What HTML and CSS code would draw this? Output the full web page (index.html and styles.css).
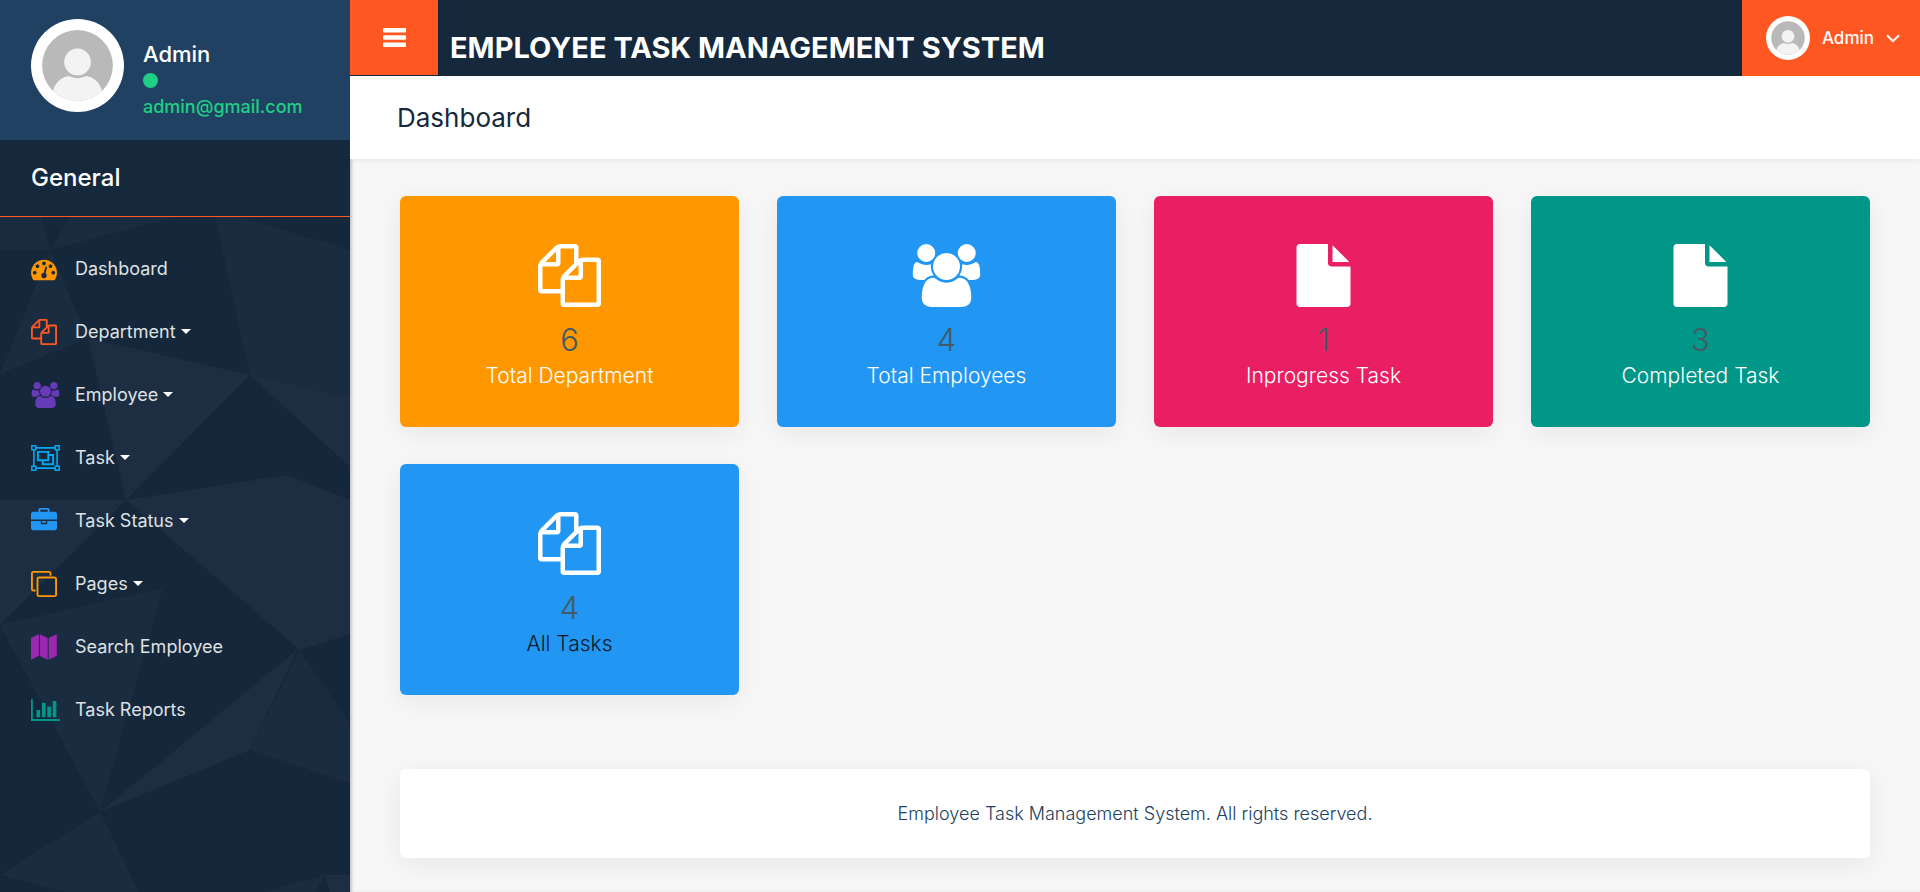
FILE: index.html
```html
<!DOCTYPE html>
<html lang="en">
<head>
<meta charset="utf-8">
<title>Employee Task Management System</title>
<meta name="viewport" content="width=device-width, initial-scale=1">
<link rel="stylesheet" href="styles.css">
</head>
<body>
<svg class="sprite" aria-hidden="true">
  <symbol id="copy" viewBox="0 0 1792 1792"><path d="M1696 384q40 0 68 28t28 68v1216q0 40-28 68t-68 28h-960q-40 0-68-28t-28-68v-288h-544q-40 0-68-28t-28-68v-672q0-40 20-88t48-76l408-408q28-28 76-48t88-20h416q40 0 68 28t28 68v328q68-40 128-40h416zm-544 213l-299 299h299v-299zm-640-384l-299 299h299v-299zm196 647l316-316v-416h-384v416q0 40-28 68t-68 28h-416v640h512v-256q0-40 20-88t48-76zm956 804v-1152h-384v416q0 40-28 68t-68 28h-416v640h896z"/></symbol>
  <symbol id="file" viewBox="0 0 1792 1792"><path d="M1152 512v-472q22 14 36 28l408 408q14 14 28 36h-472zm-128 32q0 40 28 68t68 28h544v1056q0 40-28 68t-68 28h-1344q-40 0-68-28t-28-68v-1600q0-40 28-68t68-28h800v544z"/></symbol>
  <symbol id="users" viewBox="0 0 1920 1792"><path d="M593 896q-162 5-265 128h-134q-82 0-138-40.5t-56-118.5q0-353 124-353 6 0 43.5 21t97.5 42.5 119 21.5q67 0 133-23-5 37-5 66 0 139 81 256zm1071 637q0 120-73 189.5t-194 69.5h-874q-121 0-194-69.5t-73-189.5q0-53 3.5-103.5t14-109 26.5-108.5 43-97.5 62-81 85.5-53.5 111.5-20q10 0 43 21.5t73 48 107 48 135 21.5 135-21.5 107-48 73-48 43-21.5q61 0 111.5 20t85.5 53.5 62 81 43 97.5 26.5 108.5 14 109 3.5 103.5zm-1024-1277q0 106-75 181t-181 75-181-75-75-181 75-181 181-75 181 75 75 181zm704 384q0 159-112.5 271.5t-271.5 112.5-271.5-112.5-112.5-271.5 112.5-271.5 271.5-112.5 271.5 112.5 112.5 271.5zm576 225q0 78-56 118.5t-138 40.5h-134q-103-123-265-128 81-117 81-256 0-29-5-66 66 23 133 23 59 0 119-21.5t97.5-42.5 43.5-21q124 0 124 353zm-128-609q0 106-75 181t-181 75-181-75-75-181 75-181 181-75 181 75 75 181z"/></symbol>
  <symbol id="gauge" viewBox="0 0 1792 1792"><path d="M384 1152q0-53-37.5-90.5t-90.5-37.5-90.5 37.5-37.5 90.5 37.5 90.5 90.5 37.5 90.5-37.5 37.5-90.5zm192-448q0-53-37.5-90.5t-90.5-37.5-90.5 37.5-37.5 90.5 37.5 90.5 90.5 37.5 90.5-37.5 37.5-90.5zm428 481l101-382q6-26-7.5-48.5t-38.5-29.5-48 6.5-30 39.5l-101 382q-60 5-107 43.5t-63 98.5q-20 77 20 146t117 89 146-20 89-117q16-60-6-117t-72-91zm660-33q0-53-37.5-90.5t-90.5-37.5-90.5 37.5-37.5 90.5 37.5 90.5 90.5 37.5 90.5-37.5 37.5-90.5zm-640-640q0-53-37.5-90.5t-90.5-37.5-90.5 37.5-37.5 90.5 37.5 90.5 90.5 37.5 90.5-37.5 37.5-90.5zm448 192q0-53-37.5-90.5t-90.5-37.5-90.5 37.5-37.5 90.5 37.5 90.5 90.5 37.5 90.5-37.5 37.5-90.5zm320 448q0 261-141 483-19 29-54 29h-1402q-35 0-54-29-141-221-141-483 0-182 71-348t191-286 286-191 348-71 348 71 286 191 191 286 71 348z"/></symbol>
  <symbol id="group" viewBox="0 0 29 26"><g fill="none" stroke="currentColor"><path stroke-width="1.6" d="M5 2.9h19M5 23.1h19M2.9 5v16M26.1 5v16"/><path stroke-width="1.5" d="M.8.8h4v4h-4zM24.2.8h4v4h-4zM.8 21.2h4v4h-4zM24.2 21.2h4v4h-4z"/><path stroke-width="1.9" d="M6.9 6.9h10.4v8.4H6.9zM17.3 10h4.800v9.200H11.700v-3.900"/></g></symbol>
  <symbol id="briefcase" viewBox="0 0 1792 1792"><path d="M640 256h512v-128h-512v128zm1152 640v480q0 66-47 113t-113 47h-1472q-66 0-113-47t-47-113v-480h672v160q0 26 19 45t45 19h320q26 0 45-19t19-45v-160h672zm-768 0v128h-256v-128h256zm768-480v384h-1792v-384q0-66 47-113t113-47h352v-160q0-40 28-68t68-28h576q40 0 68 28t28 68v160h352q66 0 113 47t47 113z"/></symbol>
  <symbol id="clone" viewBox="0 0 1792 1792"><path d="M1664 1632v-1088q0-13-9.5-22.5t-22.5-9.5h-1088q-13 0-22.5 9.5t-9.5 22.5v1088q0 13 9.5 22.5t22.5 9.5h1088q13 0 22.5-9.5t9.5-22.5zm128-1088v1088q0 66-47 113t-113 47h-1088q-66 0-113-47t-47-113v-1088q0-66 47-113t113-47h1088q66 0 113 47t47 113zm-384-384v160h-128v-160q0-13-9.5-22.5t-22.5-9.5h-1088q-13 0-22.5 9.5t-9.5 22.5v1088q0 13 9.5 22.5t22.5 9.5h160v128h-160q-66 0-113-47t-47-113v-1088q0-66 47-113t113-47h1088q66 0 113 47t47 113z"/></symbol>
  <symbol id="map" viewBox="0 0 26 26"><path d="M0 4.3Q0 4 .4 3.8L7.9.2v21.6L.5 25.6Q0 25.8 0 25.2zM8.9.2l7.8 3.9v21.7l-7.8-3.9zM17.7 4.1l7.6-3.8q.5-.2.5.4v20.9q0 .3-.4.5l-7.7 3.7z"/></symbol>
  <symbol id="chart" viewBox="0 0 2048 1792"><path d="M640 896v512h-256v-512h256zm384-512v1024h-256v-1024h256zm1024 1152v128h-2048v-1536h128v1408h1920zm-640-896v768h-256v-768h256zm384-384v1152h-256v-1152h256z"/></symbol>
  <symbol id="avatar" viewBox="0 0 92 92"><clipPath id="disc"><circle cx="46" cy="46" r="35"/></clipPath><circle cx="46" cy="46" r="46" fill="#fff"/><circle cx="46" cy="46" r="35" fill="#b9b9b9"/><g clip-path="url(#disc)" fill="#f3f3f3"><path d="M20 84q0-24 17-27.500q9 4 18 0Q72 60 72 84z"/><circle cx="46" cy="42.500" r="13.200"/></g></symbol>
</svg>

<div class="layout">
  <aside class="sidebar">
    <svg class="facets" viewBox="0 0 350 892" preserveAspectRatio="xMinYMin slice" aria-hidden="true">
      <g fill="#1d2e43">
        <path d="M88 338 250 375 126 500zM250 375 350 397V467zM0 500H126L0 625zM126 500 287 475 350 500V595L300 650zM300 650 350 595V634zM297 650 250 750 100 812zM325 875H350V892H330z"/>
      </g>
      <g fill="#1a2c40">
        <path d="M0 217H42L50 250H0zM50 250 70 217H175zM215 217H240L350 250 250 375zM350 250V397L250 375zM50 250 88 338 0 374zM0 625 163 588 100 812zM300 650 350 724V783L250 750zM100 812 0 875 66 892H139zM325 875 265 892H315z"/>
      </g>
    </svg>
    <div class="profile">
      <svg class="profile-photo" aria-hidden="true"><use href="#avatar"/></svg>
      <div class="profile-info">
        <h2 class="profile-name">Admin</h2>
        <span class="online"></span>
        <p class="email">admin@gmail.com</p>
      </div>
    </div>
    <h3 class="section">General</h3>
    <nav>
      <ul class="menu">
        <li><a class="link" href="#"><svg class="icon yellow"><use href="#gauge"/></svg>Dashboard</a></li>
        <li><a class="link drop" href="#"><svg class="icon orange"><use href="#copy"/></svg>Department</a></li>
        <li><a class="link drop" href="#"><svg class="icon wide purple"><use href="#users"/></svg>Employee</a></li>
        <li><a class="link drop" href="#"><svg class="icon wide sky"><use href="#group"/></svg>Task</a></li>
        <li><a class="link drop" href="#"><svg class="icon blue"><use href="#briefcase"/></svg>Task Status</a></li>
        <li><a class="link drop" href="#"><svg class="icon yellow"><use href="#clone"/></svg>Pages</a></li>
        <li><a class="link" href="#"><svg class="icon violet"><use href="#map"/></svg>Search Employee</a></li>
        <li><a class="link" href="#"><svg class="icon wide teal"><use href="#chart"/></svg>Task Reports</a></li>
      </ul>
    </nav>
  </aside>

  <div class="main">
    <header class="topbar">
      <button class="toggle" type="button" aria-label="Toggle menu">
        <svg width="23" height="19" viewBox="0 0 23 19"><rect width="23" height="4.500" rx="1"/><rect y="7.300" width="23" height="4.500" rx="1"/><rect y="14.500" width="23" height="4.500" rx="1"/></svg>
      </button>
      <h1 class="brand">EMPLOYEE TASK MANAGEMENT SYSTEM</h1>
      <button class="user" type="button">
        <svg class="user-photo" aria-hidden="true"><use href="#avatar"/></svg>
        <span>Admin</span>
        <svg class="chevron" width="14" height="9" viewBox="0 0 14 9" aria-hidden="true"><path d="M1 1.200 7 7.200l6-6"/></svg>
      </button>
    </header>
    <div class="page-title"><h2>Dashboard</h2></div>
    <main class="content">
      <div class="cards">
        <section class="card bg-yellow"><svg class="card-icon"><use href="#copy"/></svg><p class="count">6</p><p class="label">Total Department</p></section>
        <section class="card bg-blue"><svg class="card-icon"><use href="#users"/></svg><p class="count">4</p><p class="label">Total Employees</p></section>
        <section class="card bg-pink"><svg class="card-icon"><use href="#file"/></svg><p class="count">1</p><p class="label">Inprogress Task</p></section>
        <section class="card bg-teal"><svg class="card-icon"><use href="#file"/></svg><p class="count">3</p><p class="label">Completed Task</p></section>
        <section class="card bg-blue"><svg class="card-icon"><use href="#copy"/></svg><p class="count">4</p><p class="label dark">All Tasks</p></section>
      </div>
      <footer class="footer">Employee Task Management System. All rights reserved.</footer>
    </main>
  </div>
</div>
</body>
</html>
```

FILE: styles.css
```css
* {
  box-sizing: border-box;
  margin: 0;
  padding: 0;
}

body {
  background: #f7f7f7;
  color: #15283c;
  font-family: Inter, "Open Sans", sans-serif;
}

svg {
  fill: currentColor;
  flex: none;
}

button {
  border: 0;
  color: #fff;
  background: #ff5722;
  font-family: inherit;
  cursor: pointer;
}

.sprite {
  position: absolute;
  width: 0;
  height: 0;
}

.layout {
  display: flex;
  min-height: 100vh;
}

/* Sidebar */
.sidebar {
  position: relative;
  z-index: 1;
  flex: 0 0 350px;
  overflow: hidden;
  background: #15273b;
}

.facets {
  position: absolute;
  inset: 0;
  z-index: -1;
  width: 100%;
  height: 100%;
}

.profile {
  display: flex;
  gap: 19px;
  height: 140px;
  padding: 19px 31px 0;
  background: #214162;
}

.profile-photo {
  width: 93px;
  height: 93px;
}

.profile-info {
  padding-top: 20px;
}

.profile-name {
  color: #fff;
  font-size: 22px;
  font-weight: 500;
  line-height: 30px;
}

.online {
  display: block;
  width: 15px;
  height: 15px;
  margin: 4px 0 7px;
  border-radius: 50%;
  background: #1ed085;
}

.email {
  color: #1ed085;
  font-size: 18px;
  font-weight: 500;
  line-height: 24px;
}

.section {
  padding: 22px 31px;
  border-bottom: 1px solid #ff5722;
  background: #15283c;
  color: #fff;
  font-size: 24px;
  font-weight: 500;
  line-height: 32px;
}

.menu {
  padding-top: 20px;
  list-style: none;
}

.link {
  display: flex;
  align-items: center;
  height: 63px;
  padding: 0 31px;
  color: #dfe1e4;
  font-size: 18px;
  text-decoration: none;
}

.drop::after {
  content: "";
  margin-left: 5px;
  border: 5px solid transparent;
  border-top-color: #fff;
  border-bottom: 0;
}

.icon {
  width: 26px;
  height: 26px;
  margin-right: 18px;
}

.wide {
  width: 29px;
  margin-right: 15px;
}

.yellow { color: #ff9800; }
.orange { color: #ff5722; }
.purple { color: #673ab7; }
.sky { color: #03a9f4; }
.blue { color: #2196f3; }
.violet { color: #9c27b0; }
.teal { color: #009688; }

/* Top bar */
.main {
  flex: 1;
  min-width: 0;
  box-shadow: inset 3px 0 3px -1px rgba(0, 0, 0, 0.2);
}

.topbar {
  display: flex;
  height: 76px;
  background: #15283c;
}

.toggle {
  display: grid;
  place-items: center;
  width: 88px;
  height: 75px;
}

.brand {
  flex: 1;
  padding: 30px 12px 0;
  color: #fff;
  font-size: 29px;
  font-weight: 700;
  line-height: 36px;
  white-space: nowrap;
}

.user {
  display: flex;
  align-items: center;
  gap: 12px;
  padding: 0 20px 0 24px;
  font-size: 17px;
  font-weight: 500;
}

.user-photo {
  width: 44px;
  height: 44px;
}

.chevron {
  fill: none;
  stroke: currentColor;
  stroke-width: 2;
}

.page-title {
  padding: 25px 47px;
  background: #fff;
  box-shadow: 0 2px 6px rgba(0, 0, 0, 0.06);
}

.page-title h2 {
  font-size: 26px;
  font-weight: 400;
  line-height: 33px;
}

/* Dashboard */
.content {
  padding: 37px 50px 34px;
}

.cards {
  display: grid;
  grid-template-columns: repeat(4, 1fr);
  gap: 37px 38px;
}

.card {
  display: flex;
  flex-direction: column;
  align-items: center;
  padding: 48px 16px 36px;
  border-radius: 6px;
  box-shadow: 0 6px 28px rgba(0, 0, 0, 0.07);
}

.card-icon {
  width: 69px;
  height: 63px;
  color: #fff;
}

.count {
  margin-top: 12px;
  color: #455a64;
  font-size: 31px;
  font-weight: 300;
  line-height: 42px;
}

.label {
  color: #fff;
  font-size: 21px;
  font-weight: 300;
  line-height: 30px;
}

.dark { color: #0b1a28; }

.bg-yellow { background: #ff9800; }
.bg-blue { background: #2196f3; }
.bg-pink { background: #e91e63; }
.bg-teal { background: #009688; }

.footer {
  margin-top: 74px;
  padding: 30px;
  border-radius: 6px;
  background: #fff;
  box-shadow: 0 6px 28px rgba(0, 0, 0, 0.07);
  color: #214162;
  font-size: 18px;
  font-weight: 300;
  line-height: 29px;
  text-align: center;
}
```
